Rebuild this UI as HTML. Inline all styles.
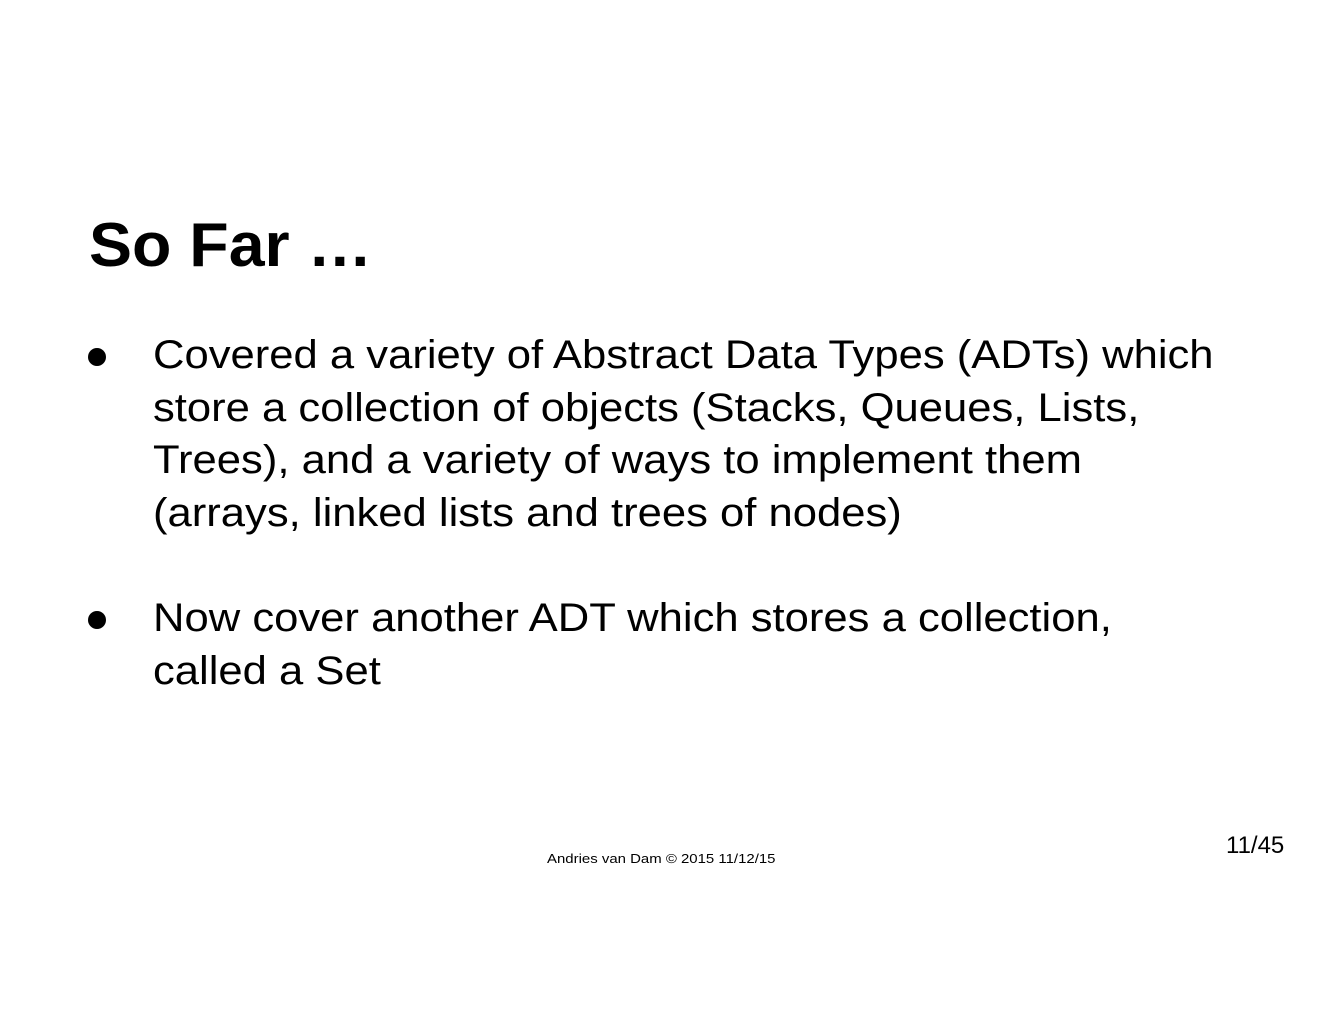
<!DOCTYPE html>
<html><head><style>
body{margin:0;width:1320px;height:1020px;background:#fff;position:relative;font-family:"Liberation Sans",sans-serif;color:#000;overflow:hidden}
.t{position:absolute;left:89px;top:206px;font-size:62px;font-weight:bold;line-height:80px;white-space:nowrap;transform:scaleX(1.04);transform-origin:0 0}
.b{position:absolute;left:153px;font-size:40px;line-height:52.5px;white-space:nowrap;transform:scaleX(1.09);transform-origin:0 0}
.d{position:absolute;left:88px;width:18px;height:18px;border-radius:50%;background:#000}
.f{position:absolute;left:547px;top:851px;font-size:13px;white-space:nowrap;transform:scaleX(1.15);transform-origin:0 0}
.p{position:absolute;left:1226px;top:832px;font-size:24px}
</style></head><body>
<div class="t">So Far …</div>
<div class="d" style="top:348px"></div>
<div class="b" style="top:329px">Covered a variety of Abstract Data Types (ADTs) which<br>store a collection of objects (Stacks, Queues, Lists,<br>Trees), and a variety of ways to implement them<br>(arrays, linked lists and trees of nodes)</div>
<div class="d" style="top:611px"></div>
<div class="b" style="top:592px">Now cover another ADT which stores a collection,<br>called a Set</div>
<div class="f">Andries van Dam © 2015 11/12/15</div>
<div class="p">11/45</div>
</body></html>
